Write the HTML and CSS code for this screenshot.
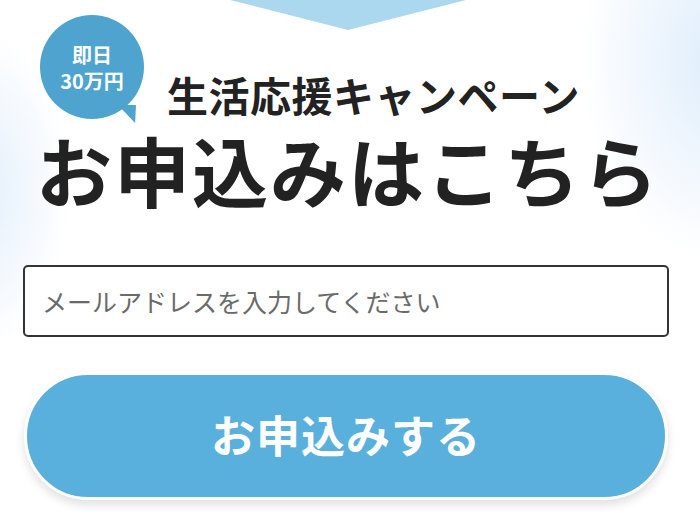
FILE: index.html
```html
<!DOCTYPE html>
<html lang="ja">
<head>
<meta charset="utf-8">
<link rel="stylesheet" href="styles.css">
</head>
<body>
<div class="page">
  <div class="arrow"></div>
  <header class="hero">
    <div class="lead">
      <div class="badge">
        <span class="badge-line">即日</span>
        <span class="badge-line">30万円</span>
        <span class="badge-tail"></span>
      </div>
      <h2 class="subtitle">生活応援キャンペーン</h2>
    </div>
    <h1 class="title">お申込みはこちら</h1>
  </header>
  <form class="form">
    <input class="email" type="email" placeholder="メールアドレスを入力してください">
    <button class="submit" type="button">お申込みする</button>
  </form>
</div>
</body>
</html>
```
FILE: styles.css
```css
* { box-sizing: border-box; }
html, body { margin: 0; padding: 0; }
body {
  width: 700px;
  height: 524px;
  overflow: hidden;
  font-family: "Noto Sans CJK JP", "Noto Sans", sans-serif;
  color: #222;
  background:
    radial-gradient(ellipse 90px 160px at -20px 190px, rgba(214,232,250,0.7), rgba(255,255,255,0) 100%),
    radial-gradient(ellipse 140px 200px at 720px 60px, rgba(214,232,250,0.8), rgba(255,255,255,0) 100%),
    #fff;
}
.page {
  position: relative;
  padding: 0 31px 0 23px;
}
.arrow {
  position: absolute;
  top: 0;
  left: 230px;
  width: 236px;
  height: 30px;
  background: #acd8ef;
  clip-path: polygon(0 0, 100% 0, 50% 100%);
}
.hero {
  padding-top: 15px;
}
.lead {
  display: flex;
  align-items: flex-end;
  gap: 23px;
  padding-left: 17px;
}
.badge {
  position: relative;
  flex: none;
  width: 104px;
  height: 104px;
  border-radius: 50%;
  background: #4fa3cf;
  color: #fff;
  display: flex;
  flex-direction: column;
  align-items: center;
  justify-content: center;
  font-weight: 700;
  font-size: 20px;
  line-height: 26px;
  padding-top: 2px;
}
.badge-tail {
  position: absolute;
  right: 8px;
  bottom: -4px;
  width: 18px;
  height: 18px;
  background: #4fa3cf;
  clip-path: polygon(0 0, 100% 0, 95% 100%);
}
.subtitle {
  margin: 0 0 -1px;
  font-size: 41px;
  line-height: 52px;
  font-weight: 700;
  letter-spacing: 0.5px;
  color: #222;
}
.title {
  margin: 6px 0 0 13px;
  font-size: 76px;
  line-height: 88px;
  font-weight: 700;
  letter-spacing: 2px;
  color: #222;
}
.form {
  display: flex;
  flex-direction: column;
  gap: 35px;
  margin-top: 52px;
}
.email {
  width: 646px;
  height: 72px;
  border: 2px solid #333;
  border-radius: 5px;
  padding: 0 17px;
  font-family: "Noto Sans CJK JP", sans-serif;
  font-size: 25px;
  background: #fff;
}
.email::placeholder { color: #6a6a6a; }
.submit {
  margin-left: 1px;
  width: 644px;
  height: 128px;
  border: 3px solid #fff;
  border-radius: 64px;
  background: #59b0dc;
  color: #fff;
  font-family: "Noto Sans CJK JP", sans-serif;
  font-size: 44px;
  font-weight: 700;
  letter-spacing: 1px;
  box-shadow: 0 5px 10px rgba(0,0,0,0.12);
  padding: 0 0 4px;
}
```
